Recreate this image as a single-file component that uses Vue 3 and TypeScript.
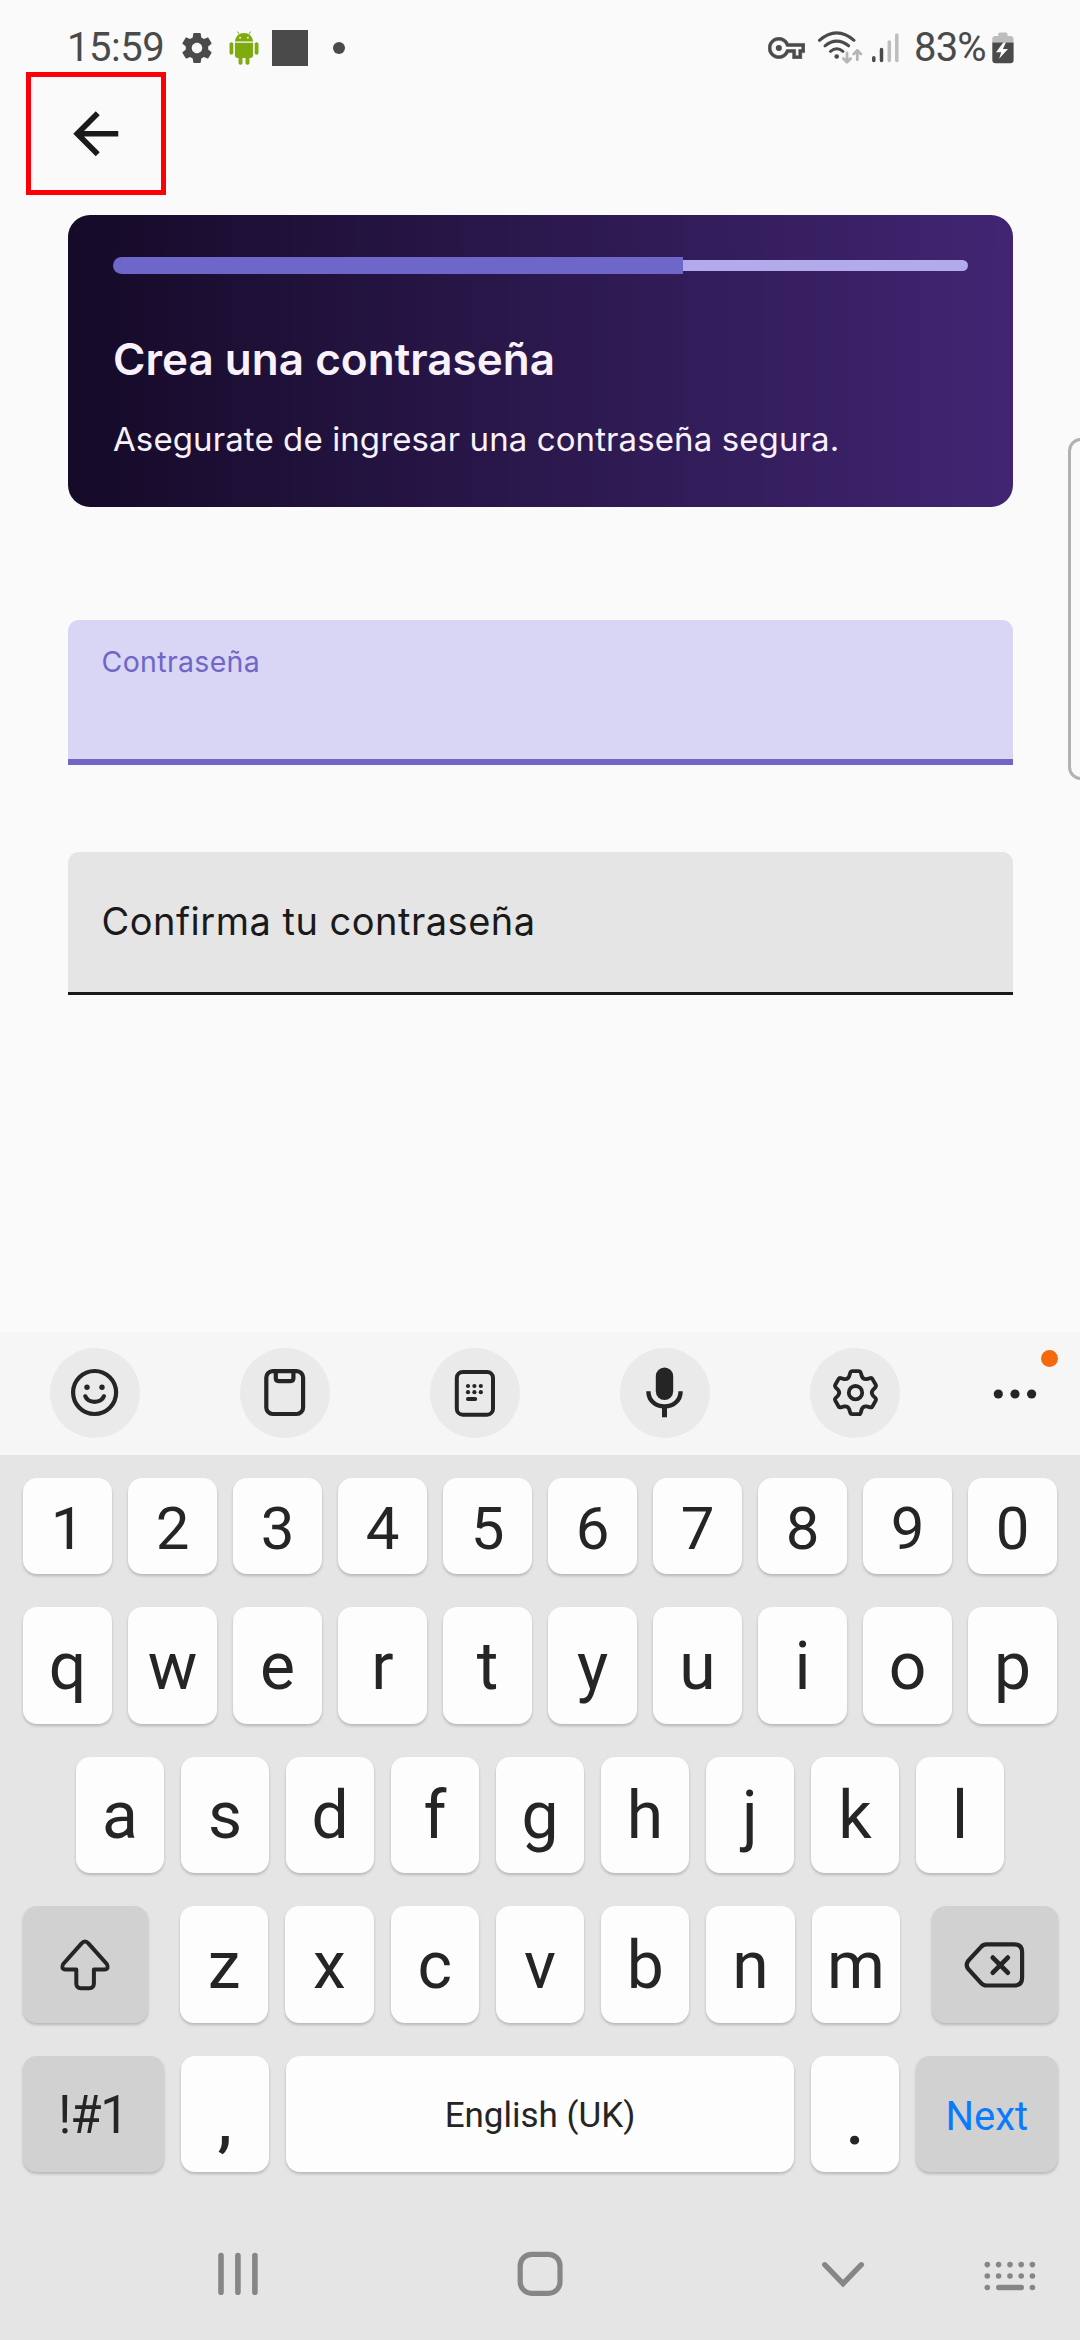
<script setup lang="ts">
interface KeyRow {
  name: string
  keys: string[]
}

const topRows: KeyRow[] = [
  { name: 'numbers', keys: [...'1234567890'] },
  { name: 'upper', keys: [...'qwertyuiop'] },
  { name: 'home', keys: [...'asdfghjkl'] },
]
const lowerKeys: string[] = [...'zxcvbnm']

const step = 2
const totalSteps = 3
const progress = `${(step / totalSteps) * 100}%`

// Six-tooth cog outline centred on the origin
function cogPath(): string {
  const turn = (x: number, y: number, i: number): string => {
    const a = (i * Math.PI) / 3
    const px = x * Math.cos(a) - y * Math.sin(a)
    const py = x * Math.sin(a) + y * Math.cos(a)
    return `${px.toFixed(2)} ${py.toFixed(2)}`
  }
  let d = ''
  for (let i = 0; i < 6; i++) {
    d += `${i === 0 ? 'M' : 'L'}${turn(-6.3, -16.4, i)}`
    d += `L${turn(-5.2, -20.2, i)}Q${turn(-4.8, -21.5, i)} ${turn(-3.5, -21.5, i)}`
    d += `L${turn(3.5, -21.5, i)}Q${turn(4.8, -21.5, i)} ${turn(5.2, -20.2, i)}`
    d += `L${turn(6.3, -16.4, i)}Q${turn(7.6, -13.2, i)} ${turn(-6.3, -16.4, i + 1)}`
  }
  return d + 'Z'
}
const cog = cogPath()

const dotColumns = [987.3, 998.6, 1010, 1021.2, 1032.4]
</script>

<template>
  <div class="screen">
    <div class="status">
      <span class="clock">15:59</span>
      <svg class="s-gear" width="30" height="30" viewBox="2 2 20 20">
        <path fill="#4a4a4a" d="M19.43 12.98c.04-.32.07-.64.07-.98s-.03-.66-.07-.98l2.11-1.65c.19-.15.24-.42.12-.64l-2-3.46c-.12-.22-.39-.3-.61-.22l-2.49 1c-.52-.4-1.08-.73-1.69-.98l-.38-2.65C14.46 2.18 14.25 2 14 2h-4c-.25 0-.46.18-.49.42l-.38 2.65c-.61.25-1.17.59-1.69.98l-2.49-1c-.23-.09-.49 0-.61.22l-2 3.46c-.13.22-.07.49.12.64l2.11 1.65c-.04.32-.07.65-.07.98s.03.66.07.98l-2.11 1.65c-.19.15-.24.42-.12.64l2 3.46c.12.22.39.3.61.22l2.49-1c.52.4 1.08.73 1.69.98l.38 2.65c.03.24.24.42.49.42h4c.25 0 .46-.18.49-.42l.38-2.65c.61-.25 1.17-.59 1.69-.98l2.49 1c.23.09.49 0 .61-.22l2-3.46c.12-.22.07-.49-.12-.64l-2.11-1.65zM12 15.5c-1.93 0-3.5-1.57-3.5-3.5s1.57-3.5 3.5-3.5 3.5 1.57 3.5 3.5-1.57 3.5-3.5 3.5z" />
      </svg>
      <svg class="s-droid" width="30" height="34" viewBox="228.5 31.5 30 34">
        <g fill="#80ab10">
          <path d="M234.4 42A9.1 8.4 0 0 1 252.6 42Z" />
          <path d="M234.4 43.2H252.6V56q0 2.4-2.4 2.4H236.8q-2.4 0-2.4-2.4Z" />
          <rect x="229" y="42.8" width="3.8" height="12.4" rx="1.9" />
          <rect x="254.2" y="42.8" width="3.8" height="12.4" rx="1.9" />
          <rect x="238" y="54" width="4" height="11.2" rx="1.8" />
          <rect x="245" y="54" width="4" height="11.2" rx="1.8" />
        </g>
        <path d="M236.9 32l2 3.2M250.1 32l-2 3.2" stroke="#80ab10" stroke-width="1" />
        <circle cx="239.6" cy="38.2" r=".9" fill="#fafafa" />
        <circle cx="247.4" cy="38.2" r=".9" fill="#fafafa" />
      </svg>
      <i class="s-square"></i>
      <i class="s-dot"></i>
      <span class="grow"></span>
      <svg class="s-key" width="37" height="22" viewBox="0 4.8 24 14.4">
        <path fill="#4a4a4a" stroke="#4a4a4a" stroke-width=".35" d="M22 19h-6v-4h-2.68c-1.14 2.42-3.6 4-6.32 4-3.86 0-7-3.14-7-7s3.14-7 7-7c2.72 0 5.17 1.58 6.32 4H24v6h-2v4zm-4-2h2v-4h2v-2H11.94l-.23-.67C11.01 8.34 9.11 7 7 7c-2.76 0-5 2.24-5 5s2.24 5 5 5c2.11 0 4.01-1.34 4.71-3.33l.23-.67H18v4z" />
        <circle cx="7" cy="12" r="2" fill="#4a4a4a" />
      </svg>
      <svg class="s-wifi" width="47" height="36" viewBox="816 30 47 36" fill="none" stroke-linecap="round">
        <g stroke="#4a4a4a" stroke-width="3">
          <path d="M818.4 40.3Q835.7 25.4 853 40.3" />
          <path d="M824 45.8Q835.7 36.4 847.6 45.8" />
          <path d="M829.5 51.3Q835.7 46.2 842 51.3" />
        </g>
        <circle cx="835.7" cy="56.5" r="2.3" fill="#4a4a4a" />
        <g stroke="#b6b6b6" stroke-width="2.8" stroke-linejoin="round">
          <path d="M846 53V62M842.4 58.6l3.6 3.6 3.6-3.6" />
          <path d="M856.3 59.8V50.4M852.7 54l3.6-3.6 3.6 3.6" />
        </g>
      </svg>
      <svg class="s-signal" width="30" height="32" viewBox="870 32 30 32" fill="none" stroke-width="3.5" stroke-linecap="round">
        <path stroke="#4a4a4a" d="M872.8 57.8V60.4M880.5 49.5V60.4" />
        <path stroke="#bdbdbd" d="M888.3 42V60.4M895.8 35V60.4" />
      </svg>
      <span class="percent">83%</span>
      <svg class="s-battery" width="22" height="32" viewBox="991.7 32 22 32">
        <path fill="#bdbdbd" d="M992 42.8V39q0-3 3-3h3v-2q0-1.6 1.6-1.6h6q1.6 0 1.6 1.6v2h3q3 0 3 3v3.8Z" />
        <path fill="#4a4a4a" d="M992 42.6h21.3V60q0 3.3-3.3 3.3H995.3q-3.3 0-3.3-3.3Z" />
        <path fill="#fafafa" d="M1003 42.6l-7.3 9.6h5.2l-2.1 6.6 8.9-9.9h-5.1l3-6.3Z" />
      </svg>
    </div>

    <div class="back">
      <svg width="67.5" height="67.5" viewBox="0 0 24 24">
        <path fill="#1a1a1a" d="M20 11H7.83l5.59-5.59L12 4l-8 8 8 8 1.41-1.41L7.83 13H20v-2z" />
      </svg>
    </div>

    <section class="card">
      <div class="progress">
        <div class="done" :style="{ width: progress }"></div>
        <div class="rest"></div>
      </div>
      <h1>Crea una contraseña</h1>
      <p>Asegurate de ingresar una contraseña segura.</p>
    </section>

    <div class="field active"><label>Contraseña</label></div>
    <div class="field idle"><label>Confirma tu contraseña</label></div>

    <div class="edge"></div>

    <div class="keyboard">
      <div class="tools">
        <span class="tool">
          <svg viewBox="65 1363 60 60" fill="none" stroke="#252525" stroke-width="4.2" stroke-linecap="round">
            <circle cx="94.6" cy="1392.5" r="21.5" />
            <path d="M85.3 1396.3A9.8 8 0 0 0 103.9 1396.3" />
            <g fill="#252525" stroke="none">
              <circle cx="87" cy="1387.3" r="2.7" />
              <circle cx="102" cy="1387.3" r="2.7" />
            </g>
          </svg>
        </span>
        <span class="tool">
          <svg viewBox="255 1363 60 60" fill="none" stroke="#252525" stroke-width="4.2">
            <rect x="266.3" y="1371.1" width="36.8" height="42.9" rx="6.5" />
            <path d="M275.8 1371v7.3q0 2.8 2.8 2.8h12q2.8 0 2.8-2.8V1371" />
          </svg>
        </span>
        <span class="tool">
          <svg viewBox="445 1363 60 60" fill="none" stroke="#252525" stroke-width="4">
            <rect x="456.8" y="1372" width="36.2" height="42.7" rx="6" />
            <path d="M468 1399h7.2" stroke-linecap="round" />
            <g fill="#252525" stroke="none">
              <circle v-for="n in 6" :key="n" :cx="468 + ((n - 1) % 3) * 6.4" :cy="n > 3 ? 1392.2 : 1386" r="2.1" />
            </g>
          </svg>
        </span>
        <span class="tool">
          <svg viewBox="635 1363 60 60" fill="none" stroke="#252525" stroke-width="4.4">
            <rect x="655.8" y="1367.4" width="17.4" height="32.6" rx="8.7" fill="#252525" stroke="none" />
            <path d="M648.4 1391.3C648.4 1411.5 680.6 1411.5 680.6 1391.3" />
            <path d="M664.5 1406V1417.3" stroke-width="5" />
          </svg>
        </span>
        <span class="tool">
          <svg viewBox="-30.5 -29.7 60 60" fill="none" stroke="#252525" stroke-width="3.8" stroke-linejoin="round">
            <path :d="cog" />
            <circle r="6.7" />
          </svg>
        </span>
        <span class="more">
          <svg width="44" height="12" viewBox="993 1388 44 12" fill="#252525">
            <circle cx="998.3" cy="1394" r="4.6" />
            <circle cx="1015" cy="1394" r="4.6" />
            <circle cx="1031.6" cy="1394" r="4.6" />
          </svg>
          <i class="badge"></i>
        </span>
      </div>

      <div class="keys">
        <div v-for="row in topRows" :key="row.name" class="row" :class="row.name">
          <span v-for="k in row.keys" :key="k" class="key">{{ k }}</span>
        </div>
        <div class="row lower">
          <span class="key mod">
            <svg width="54" height="56" viewBox="58.4 1936.6 54 56" fill="none" stroke="#252525" stroke-width="4" stroke-linejoin="round">
              <path d="M81.8 1943.2Q85.4 1939 89 1943.2L107.2 1963.6Q109.8 1969 104.8 1969H94.3V1983.2q0 4.6-4.6 4.6h-8.4q-4.6 0-4.6-4.6V1969H66Q61 1969 63.6 1963.6Z" />
            </svg>
          </span>
          <div class="letters">
            <span v-for="k in lowerKeys" :key="k" class="key">{{ k }}</span>
          </div>
          <span class="key mod">
            <svg width="64" height="50" viewBox="962.6 1939.4 64 50" fill="none" stroke="#252525" stroke-width="4.2" stroke-linecap="round">
              <path d="M986 1943.8H1014q7.7 0 7.7 7.7v25.7q0 7.7-7.7 7.7H986q-3.2 0-5.3-2.4L968 1968.6q-3.4-4.3 0-8.6L980.7 1946.2q2.1-2.4 5.3-2.4Z" />
              <path d="M992.4 1957l15 15M1007.4 1957l-15 15" stroke-width="4.8" />
            </svg>
          </span>
        </div>
        <div class="row bottom">
          <span class="key mod symbols"><b>!#1</b></span>
          <span class="key punct">,</span>
          <span class="key space">English (UK)</span>
          <span class="key punct">.</span>
          <span class="key mod next">Next</span>
        </div>
      </div>

      <div class="nav">
        <svg class="recents" width="42" height="46" viewBox="217 2251 42 46" stroke="#868686" stroke-width="5.6" stroke-linecap="round">
          <path d="M221 2255.6V2292.2M237.9 2255.6V2292.2M254.9 2255.6V2292.2" />
        </svg>
        <svg class="homebtn" width="46" height="46" viewBox="517 2251 46 46" fill="none" stroke="#868686" stroke-width="5.2">
          <rect x="520.2" y="2254.3" width="39.8" height="39.1" rx="11.5" />
        </svg>
        <svg class="hide" width="44" height="28" viewBox="821 2261 44 28" fill="none" stroke="#868686" stroke-width="5.3" stroke-linecap="round">
          <path d="M824.7 2264.7L843 2283.7L861.4 2264.7" />
        </svg>
        <svg class="switch" width="52" height="30" viewBox="984 2261 52 30" fill="#868686">
          <template v-for="(x, i) in dotColumns" :key="x">
            <circle :cx="x" cy="2264.6" r="2.8" />
            <circle :cx="x" cy="2276" r="2.8" />
            <circle v-if="i === 0 || i === 4" :cx="x" cy="2287.5" r="2.8" />
          </template>
          <rect x="996" y="2284.7" width="28" height="5.5" rx="2.7" />
        </svg>
      </div>
    </div>
  </div>
</template>

<style>
html,
body {
  margin: 0;
  background: #fafafa;
}
</style>

<style scoped>
.screen {
  position: relative;
  display: flex;
  flex-direction: column;
  width: 1080px;
  height: 2340px;
  overflow: hidden;
  background: #fafafa;
  font-family: Roboto, "Noto Sans", sans-serif;
}
svg {
  display: block;
  flex: none;
}
.status {
  display: flex;
  align-items: center;
  box-sizing: border-box;
  height: 71px;
  padding: 25px 66.5px 0 67px;
  color: #4a4a4a;
}
.clock {
  width: 114.5px;
  font-size: 40px;
  line-height: 46px;
  letter-spacing: -0.5px;
}
.s-droid {
  margin-left: 17px;
}
.s-square {
  width: 36px;
  height: 36px;
  margin-left: 13px;
  background: #4a4a4a;
}
.s-dot {
  width: 12px;
  height: 12px;
  margin-left: 25px;
  border-radius: 50%;
  background: #4a4a4a;
}
.grow {
  flex: 1;
}
.s-wifi {
  margin-left: 12.5px;
}
.s-signal {
  margin-left: 7px;
}
.percent {
  width: 77px;
  margin-left: 13px;
  font-size: 40px;
  line-height: 46px;
  letter-spacing: -0.8px;
}
.s-battery {
  margin-left: 0.5px;
}
.back {
  display: flex;
  align-items: center;
  box-sizing: border-box;
  width: 140px;
  height: 123px;
  margin: 1px 0 0 25.5px;
  padding-left: 31.7px;
  border: 5px solid #fb0007;
}
.card {
  box-sizing: border-box;
  width: 945px;
  height: 292px;
  margin: 20px 0 0 67.5px;
  padding: 42px 45px 0 45.5px;
  border-radius: 22px;
  background: linear-gradient(90deg, #150a28, #2d1950 54%, #412573);
  color: #f9f2fd;
  font-family: Inter, "Noto Sans", sans-serif;
}
.progress {
  display: flex;
  align-items: center;
  height: 17px;
}
.done {
  height: 17px;
  border-radius: 9px 0 0 9px;
  background: #6f66ca;
}
.rest {
  flex: 1;
  height: 11px;
  border-radius: 0 6px 6px 0;
  background: #b2aaea;
}
.card h1 {
  margin: 58px 0 0;
  font-size: 44px;
  font-weight: 600;
  line-height: 54px;
  letter-spacing: 0.03px;
  white-space: nowrap;
}
.card p {
  margin: 33px 0 0;
  font-size: 33px;
  line-height: 40px;
  letter-spacing: 0.1px;
  white-space: nowrap;
}
.field {
  box-sizing: border-box;
  width: 945px;
  margin-left: 67.5px;
  padding-left: 34px;
  border-radius: 11px 11px 0 0;
  font-family: Inter, "Noto Sans", sans-serif;
}
.field label {
  display: block;
  white-space: nowrap;
}
.active {
  height: 145px;
  margin-top: 113px;
  border-bottom: 6px solid #6f66c8;
  background: #d8d6f4;
  color: #6f66c8;
}
.active label {
  padding-top: 24px;
  font-size: 28.5px;
  line-height: 36px;
  letter-spacing: 0.33px;
}
.idle {
  height: 143px;
  margin-top: 87px;
  border-bottom: 3px solid #1a1a1a;
  background: #e5e5e5;
  color: #1a1a1a;
}
.idle label {
  padding-top: 46px;
  font-size: 38px;
  line-height: 46px;
  letter-spacing: 0.5px;
}
.edge {
  position: absolute;
  top: 438px;
  right: -20px;
  box-sizing: border-box;
  width: 32.5px;
  height: 342px;
  border: 3px solid #b2b2b2;
  border-radius: 13px;
}
.keyboard {
  display: flex;
  flex-direction: column;
  height: 1008px;
  margin-top: auto;
  background: #e5e5e5;
}
.tools {
  display: flex;
  gap: 100px;
  box-sizing: border-box;
  height: 123px;
  padding: 16px 0 0 50px;
  background: #f6f6f6;
}
.tool {
  display: flex;
  align-items: center;
  justify-content: center;
  width: 90px;
  height: 90px;
  border-radius: 50%;
  background: #eaeaea;
}
.tool svg {
  width: 60px;
  height: 60px;
}
.more {
  position: relative;
  display: flex;
  align-items: center;
  height: 92px;
  margin-left: -7px;
}
.badge {
  position: absolute;
  top: 2px;
  left: 48px;
  width: 17px;
  height: 17px;
  border-radius: 50%;
  background: #f5690c;
}
.keys {
  display: flex;
  flex-direction: column;
  gap: 33px;
  padding-top: 23px;
}
.row {
  display: flex;
  box-sizing: border-box;
  height: 117px;
}
.key {
  display: flex;
  flex: 1 1 0;
  align-items: center;
  justify-content: center;
  box-sizing: border-box;
  min-width: 0;
  padding-top: 2px;
  border-radius: 14px;
  background: #fdfdfd;
  box-shadow: 0 2px 3px rgba(0, 0, 0, 0.2);
  color: #252525;
  font-size: 66px;
  line-height: 78px;
  white-space: nowrap;
}
.numbers {
  gap: 16px;
  height: 96px;
  padding: 0 23px;
}
.numbers .key {
  padding-top: 5px;
  font-size: 60px;
  line-height: 70px;
}
.upper {
  gap: 16px;
  padding: 0 23px;
}
.home {
  gap: 17px;
  height: 116px;
  padding: 0 76px;
}
.lower {
  gap: 32px;
  padding: 0 22.5px;
}
.letters {
  display: flex;
  flex: 1;
  gap: 17px;
}
.mod {
  background: #d1d1d1;
}
.lower .mod {
  flex: none;
  width: 125.5px;
  padding-top: 0;
}
.bottom {
  gap: 17px;
  height: 116px;
  padding: 0 22.5px;
}
.bottom .punct {
  flex: none;
  width: 88px;
  padding-top: 16px;
  font-weight: 500;
}
.bottom .symbols {
  flex: none;
  width: 141.5px;
  font-size: 54px;
}
.symbols b {
  font-weight: 400;
  letter-spacing: -1.2px;
  transform: scaleX(0.94);
}
.bottom .space {
  padding-top: 4px;
  font-size: 35px;
}
.bottom .next {
  flex: none;
  width: 141.5px;
  padding-top: 6px;
  color: #0b7bfb;
  font-size: 40px;
}
.nav {
  display: flex;
  align-items: center;
  box-sizing: border-box;
  height: 168px;
  padding-top: 48px;
}
.recents {
  margin: -12px 0 0 217px;
}
.homebtn {
  margin: -12px 0 0 258px;
}
.hide {
  margin: -11px 0 0 258px;
}
.switch {
  margin: -8px 0 0 119px;
}
</style>
